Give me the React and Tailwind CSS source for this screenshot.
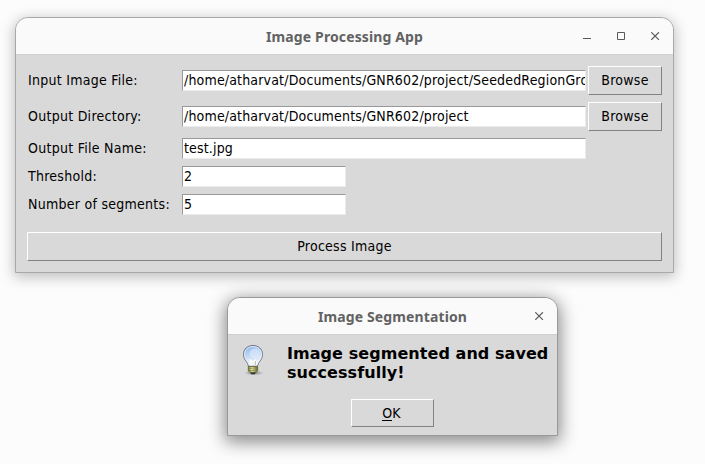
const face = "font-['DejaVu_Sans_Condensed','DejaVu_Sans',sans-serif] text-[14px] tracking-[0.27px]";

function Field({ label, value, width, browse }) {
  return (
    <div className={`flex items-center ${browse ? "h-[29px]" : "h-[21px]"}`}>
      <span className="w-[155px] shrink-0 pb-[2px] pl-px leading-[18px]">{label}</span>
      <div className={`h-[21px] ${width} shrink-0 overflow-hidden whitespace-nowrap border border-t-[#999] border-l-[#999] border-r-[#ececec] border-b-[#ececec] bg-white pl-px leading-[19px] tracking-[0.17px]`}>
        {value}
      </div>
      {browse && <Button className="ml-[2px] h-[29px] w-[74px]">Browse</Button>}
    </div>
  );
}

function Button({ className, children }) {
  return (
    <button className={`flex items-center justify-center border border-t-white border-l-white border-r-[#828282] border-b-[#828282] bg-[#d9d9d9] pb-px leading-[18px] tracking-[0.27px] ${className}`}>
      {children}
    </button>
  );
}

function CloseIcon() {
  return (
    <svg width="9" height="9" viewBox="0 0 9 9" stroke="#5a5a5a" strokeWidth="1.2">
      <path d="M.3.3l7.6 7.6M7.9.3L.3 7.9" />
    </svg>
  );
}

function TitleBar({ title, children }) {
  return (
    <div className="relative flex h-[37px] items-center justify-center rounded-t-[12px] border-b border-[#cfcfcf] bg-[#fafafa] pt-px font-['Noto_Sans',sans-serif] text-[14px] font-bold text-[#626262]">
      <span className="whitespace-nowrap tracking-[0.12px]">{title}</span>
      {children}
    </div>
  );
}

function Bulb() {
  return (
    <svg width="24" height="32" viewBox="0 0 24 32">
      <defs>
        <radialGradient id="shade">
          <stop offset="0" stopColor="#555" stopOpacity=".65" />
          <stop offset="1" stopColor="#555" stopOpacity="0" />
        </radialGradient>
        <linearGradient id="glass" x1="0" y1="0" x2=".25" y2="1">
          <stop offset="0" stopColor="#86b0ea" />
          <stop offset=".5" stopColor="#bed5f4" />
          <stop offset="1" stopColor="#f5f7f8" />
        </linearGradient>
        <linearGradient id="brass">
          <stop offset="0" stopColor="#74743b" />
          <stop offset=".4" stopColor="#f3f2ad" />
          <stop offset="1" stopColor="#626331" />
        </linearGradient>
      </defs>
      <ellipse cx="13" cy="29" rx="10" ry="2.5" fill="url(#shade)" />
      <path d="M12 1.5C6.3 1.5 2.5 5.2 2.5 10.4c0 3.3 1.4 5.3 2.9 7.3 1.2 1.5 1.7 2.6 1.9 4.4h9.4c.2-1.8.7-2.9 1.9-4.4 1.5-2 2.9-4 2.9-7.3 0-5.2-3.8-8.9-9.5-8.9Z" fill="url(#glass)" stroke="#70757e" />
      <path d="M12 2.5c-5 0-8.4 3.3-8.4 7.9 0 2.9 1.3 4.7 2.7 6.6 1.1 1.4 1.6 2.4 1.9 4.1h7.6c.3-1.7.8-2.7 1.9-4.1 1.4-1.9 2.7-3.7 2.7-6.6 0-4.6-3.4-7.9-8.4-7.9Z" fill="none" stroke="#edf4ff" strokeWidth=".8" />
      <ellipse cx="13.8" cy="9.5" rx="5.2" ry="5" fill="#dce9fa" opacity=".65" />
      <path d="M10 21l-.8-5 2.6 2 2.4-2 1 2-1.2 3" fill="none" stroke="#fff" strokeWidth="1.3" />
      <path d="M14.5 17v4" stroke="#c2c2b6" />
      <path d="M7.3 22.5h9.4v4.4l-1.5 1.4H8.8l-1.5-1.4Z" fill="url(#brass)" stroke="#62632f" strokeWidth=".8" />
      <path d="M7.4 24.5l9.2-.8M7.4 26.7l9.2-.8" stroke="#777841" strokeWidth=".7" />
      <path d="M9.2 28.5h5.6l-1 1.7h-3.6Z" fill="#353632" />
    </svg>
  );
}

export default function App() {
  return (
    <main className={`relative h-[464px] w-[705px] overflow-hidden bg-[#fcfcfc] text-black ${face}`}>
      <section className="absolute left-[15px] top-[17px] h-[256px] w-[659px] rounded-t-[13px] border border-[#a9a9a9] bg-[#d9d9d9] shadow-[0_3px_14px_1px_rgba(0,0,0,0.25)]">
        <TitleBar title="Image Processing App">
          <div className="absolute right-[13px] top-[14px] flex gap-[25px]">
            <svg width="9" height="9" viewBox="0 0 9 9"><path d="M0 6.5h8" stroke="#5a5a5a" /></svg>
            <svg width="9" height="9" viewBox="0 0 9 9" fill="none" stroke="#5a5a5a"><path d="M.5.5h7v7h-7z" /></svg>
            <CloseIcon />
          </div>
        </TitleBar>
        <div className="flex flex-col gap-[7px] pl-[11px] pt-[11px]">
          <Field label="Input Image File:" value="/home/atharvat/Documents/GNR602/project/SeededRegionGro" width="w-[404px]" browse />
          <Field label="Output Directory:" value="/home/atharvat/Documents/GNR602/project" width="w-[404px]" browse />
          <Field label="Output File Name:" value="test.jpg" width="w-[404px]" />
          <Field label="Threshold:" value="2" width="w-[164px]" />
          <Field label="Number of segments:" value="5" width="w-[164px]" />
          <Button className="mt-[10px] h-[29px] w-[635px]">Process Image</Button>
        </div>
      </section>
      <section className="absolute left-[227px] top-[297px] h-[139px] w-[331px] rounded-t-[13px] border border-[#999] bg-[#d9d9d9] shadow-[0_4px_17px_2px_rgba(0,0,0,0.46)]">
        <TitleBar title="Image Segmentation">
          <div className="absolute right-[13px] top-[14px]"><CloseIcon /></div>
        </TitleBar>
        <div className="flex pl-[13px] pt-[9px]">
          <Bulb />
          <p className="ml-[22px] whitespace-nowrap font-['DejaVu_Sans',sans-serif] text-[16px] font-bold leading-[19px] tracking-[0.06px]">
            Image segmented and saved<br />successfully!
          </p>
        </div>
        <Button className="ml-[123px] mt-[17px] h-[28px] w-[83px] pr-[2px]">
          <span className="flex leading-[16px]"><span className="h-[16px] border-b border-black">O</span>K</span>
        </Button>
      </section>
    </main>
  );
}
